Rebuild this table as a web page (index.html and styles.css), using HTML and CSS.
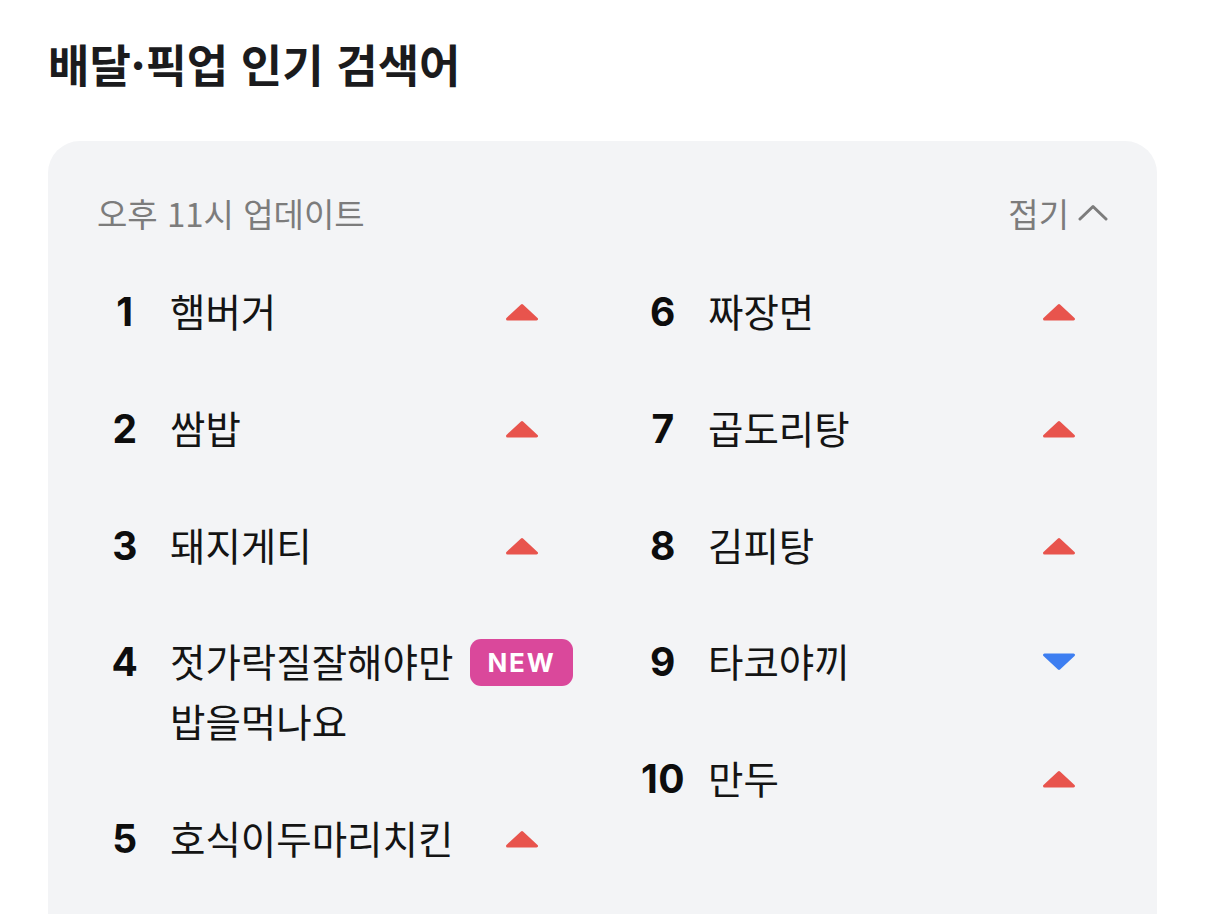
FILE: index.html
```html
<!DOCTYPE html>
<html lang="ko">
<head>
<meta charset="utf-8">
<title>배달·픽업 인기 검색어</title>
<link rel="stylesheet" href="styles.css">
</head>
<body>
<div class="page">
  <h1 class="title">배달·픽업 인기 검색어</h1>
  <section class="card">
    <div class="card-head">
      <span class="updated">오후 11시 업데이트</span>
      <span class="fold">접기
        <svg class="chev" width="30" height="17" viewBox="0 0 30 17"><polyline points="2,15 15,2.5 28,15" fill="none" stroke="#7c7c7c" stroke-width="3" stroke-linecap="round" stroke-linejoin="round"/></svg>
      </span>
    </div>
    <div class="cols">
      <ol class="col">
        <li class="row"><span class="num">1</span><span class="name">햄버거</span><span class="ind"><svg class="tri" width="34" height="18" viewBox="0 0 34 18"><polygon points="2.5,16 17,2.5 31.5,16" fill="#e8544d" stroke="#e8544d" stroke-width="3" stroke-linejoin="round"/></svg></span></li>
        <li class="row"><span class="num">2</span><span class="name">쌈밥</span><span class="ind"><svg class="tri" width="34" height="18" viewBox="0 0 34 18"><polygon points="2.5,16 17,2.5 31.5,16" fill="#e8544d" stroke="#e8544d" stroke-width="3" stroke-linejoin="round"/></svg></span></li>
        <li class="row"><span class="num">3</span><span class="name">돼지게티</span><span class="ind"><svg class="tri" width="34" height="18" viewBox="0 0 34 18"><polygon points="2.5,16 17,2.5 31.5,16" fill="#e8544d" stroke="#e8544d" stroke-width="3" stroke-linejoin="round"/></svg></span></li>
        <li class="row"><span class="num">4</span><span class="name">젓가락질잘해야만밥을먹나요</span><span class="ind"><span class="badge">NEW</span></span></li>
        <li class="row"><span class="num">5</span><span class="name">호식이두마리치킨</span><span class="ind"><svg class="tri" width="34" height="18" viewBox="0 0 34 18"><polygon points="2.5,16 17,2.5 31.5,16" fill="#e8544d" stroke="#e8544d" stroke-width="3" stroke-linejoin="round"/></svg></span></li>
      </ol>
      <ol class="col">
        <li class="row"><span class="num">6</span><span class="name">짜장면</span><span class="ind"><svg class="tri" width="34" height="18" viewBox="0 0 34 18"><polygon points="2.5,16 17,2.5 31.5,16" fill="#e8544d" stroke="#e8544d" stroke-width="3" stroke-linejoin="round"/></svg></span></li>
        <li class="row"><span class="num">7</span><span class="name">곱도리탕</span><span class="ind"><svg class="tri" width="34" height="18" viewBox="0 0 34 18"><polygon points="2.5,16 17,2.5 31.5,16" fill="#e8544d" stroke="#e8544d" stroke-width="3" stroke-linejoin="round"/></svg></span></li>
        <li class="row"><span class="num">8</span><span class="name">김피탕</span><span class="ind"><svg class="tri" width="34" height="18" viewBox="0 0 34 18"><polygon points="2.5,16 17,2.5 31.5,16" fill="#e8544d" stroke="#e8544d" stroke-width="3" stroke-linejoin="round"/></svg></span></li>
        <li class="row"><span class="num">9</span><span class="name">타코야끼</span><span class="ind"><svg class="tri" width="34" height="18" viewBox="0 0 34 18"><polygon points="2.5,2 17,15.5 31.5,2" fill="#3d7ef1" stroke="#3d7ef1" stroke-width="3" stroke-linejoin="round"/></svg></span></li>
        <li class="row"><span class="num">10</span><span class="name">만두</span><span class="ind"><svg class="tri" width="34" height="18" viewBox="0 0 34 18"><polygon points="2.5,16 17,2.5 31.5,16" fill="#e8544d" stroke="#e8544d" stroke-width="3" stroke-linejoin="round"/></svg></span></li>
      </ol>
    </div>
  </section>
</div>
</body>
</html>
```

FILE: styles.css
```css
html, body {
  margin: 0;
  padding: 0;
  background: #ffffff;
}
body {
  font-family: "Noto Sans CJK KR", "Noto Sans", sans-serif;
  color: #111111;
  overflow: hidden;
}
.page {
  padding: 36px 49px 0 48px;
}
.title {
  margin: 0 0 49px 0;
  font-size: 45px;
  line-height: 56px;
  font-weight: 700;
  color: #1b1b1d;
}
.card {
  background: #f3f4f6;
  border-radius: 32px;
  padding: 52px 46px 80px 49px;
}
.card-head {
  display: flex;
  justify-content: space-between;
  align-items: center;
  height: 40px;
  padding-right: 3px;
  color: #7c7c7c;
  font-size: 33px;
  line-height: 40px;
}
.fold {
  display: flex;
  align-items: center;
  gap: 9px;
}
.chev {
  display: block;
  margin-top: -1px;
}
.cols {
  display: grid;
  grid-template-columns: 476px 475.5px;
  column-gap: 62px;
  margin-top: 49px;
}
.col {
  list-style: none;
  margin: 0;
  padding: 0;
  display: flex;
  flex-direction: column;
  gap: 56.75px;
}
.row {
  display: flex;
  align-items: flex-start;
}
.num {
  flex: 0 0 56px;
  text-align: center;
  font-family: Inter, "Liberation Sans", sans-serif;
  font-weight: 700;
  font-size: 39px;
  line-height: 60px;
  color: #0d0d0d;
  letter-spacing: 0.5px;
}
.name {
  flex: 1 1 auto;
  min-width: 0;
  margin: -2px 0 2px 17px;
  font-size: 38.5px;
  line-height: 60px;
  color: #141414;
}
.ind {
  flex: 0 0 103px;
  height: 60px;
  margin-left: 10px;
  display: flex;
  align-items: center;
  justify-content: center;
}
.tri {
  display: block;
}
.badge {
  display: flex;
  align-items: center;
  justify-content: center;
  width: 103px;
  height: 47px;
  border-radius: 11px;
  background: #da489b;
  color: #ffffff;
  font-family: Inter, "Liberation Sans", sans-serif;
  font-weight: 700;
  font-size: 26px;
  letter-spacing: 1.8px;
}
```
